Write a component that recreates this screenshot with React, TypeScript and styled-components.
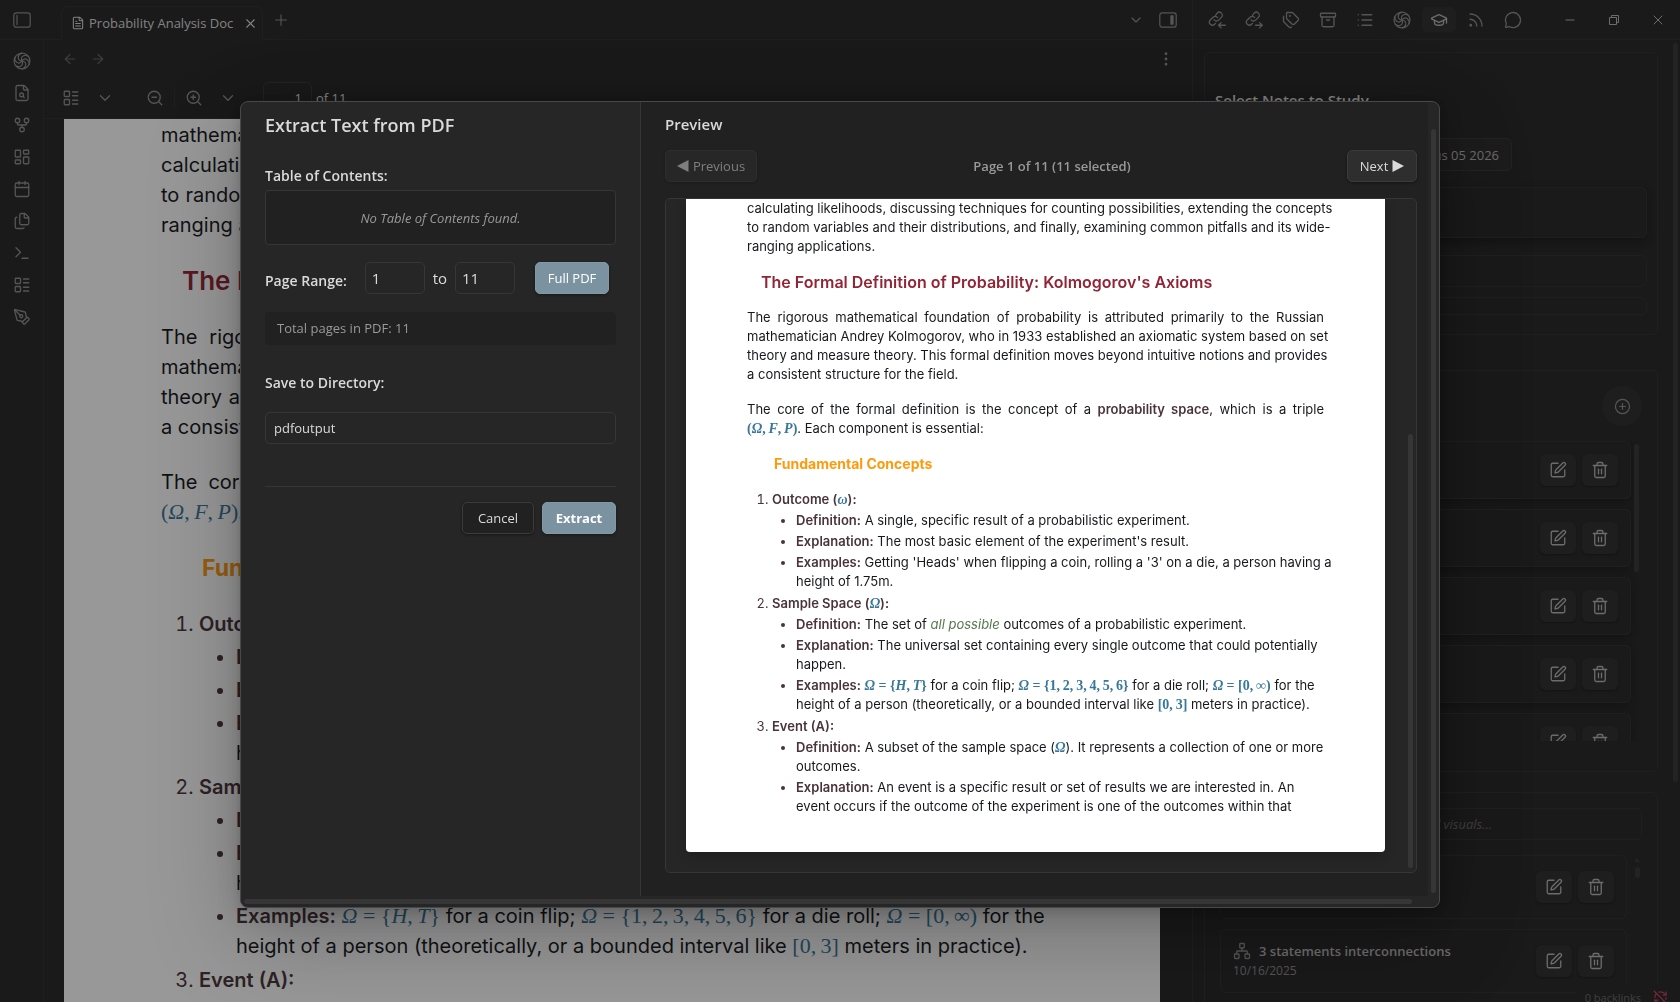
import React from "react";
import styled, { createGlobalStyle, css } from "styled-components";
import {
  Archive,
  ArrowLeft,
  ArrowRight,
  Calendar,
  ChevronDown,
  CirclePlus,
  EllipsisVertical,
  FileSearch,
  FileText,
  Files,
  GitFork,
  GraduationCap,
  LayoutDashboard,
  LayoutList,
  List,
  MessageCircle,
  Minus,
  Network,
  PenTool,
  Plus,
  RefreshCwOff,
  Rss,
  SquarePen,
  Tags,
  Terminal,
  Trash2,
  X,
  ZoomIn,
  ZoomOut,
} from "lucide-react";

const ui = `"Segoe UI", "Open Sans", "Noto Sans", sans-serif`;
const docFont = `Inter, "Liberation Sans", sans-serif`;
const mathFont = `"Liberation Serif", "Times New Roman", serif`;

const c = {
  bg: "#262626",
  side: "#212121",
  raised: "#2e2e2e",
  line: "#363636",
  faintLine: "#303030",
  text: "#dadada",
  muted: "#b3b3b3",
  icon: "#8c8c8c",
  faint: "#666666",
  accent: "#7b93a0",
};

const Global = createGlobalStyle`
  *, *::before, *::after { box-sizing: border-box; }
  body { margin: 0; background: ${c.bg}; }
  h1, h2, h3, p, ol, ul { margin: 0; padding: 0; }
  button, input { font: inherit; color: inherit; }
  svg { flex: none; }
`;

/* ---------- shell ---------- */

const Shell = styled.div`
  display: flex;
  flex-direction: column;
  height: 100vh;
  overflow: hidden;
  background: ${c.bg};
  color: ${c.text};
  font: 13px/20px ${ui};
`;

const TitleBar = styled.header`
  display: flex;
  flex: none;
  height: 40px;
  border-bottom: 1px solid ${c.faintLine};
`;

const IconButton = styled.button<{ $w?: number; $h?: number; $tone?: string; $active?: boolean }>`
  display: flex;
  flex: none;
  align-items: center;
  justify-content: center;
  width: ${(p) => p.$w ?? 32}px;
  height: ${(p) => p.$h ?? 32}px;
  padding: 0;
  border: 0;
  border-radius: 5px;
  background: ${(p) => (p.$active ? c.raised : "transparent")};
  color: ${(p) => p.$tone ?? c.icon};
`;

const TabStrip = styled.div`
  display: flex;
  flex: 1;
  min-width: 0;
  align-items: center;
  padding-right: 8px;
`;

const Tab = styled.div`
  display: flex;
  align-items: center;
  align-self: flex-end;
  width: 202px;
  height: 34px;
  margin: 0 2px -1px 17px;
  padding-left: 9px;
  border: 1px solid ${c.faintLine};
  border-bottom-color: ${c.bg};
  border-radius: 7px 7px 0 0;
  gap: 4px;
  color: ${c.text};
`;

const TabLabel = styled.span`
  flex: 1;
  min-width: 0;
  white-space: nowrap;
`;

const Spacer = styled.div`
  flex: 1;
`;

const SideBarTools = styled.div`
  display: flex;
  flex: none;
  align-items: center;
  width: 488px;
  padding-left: 7px;
  border-left: 1px solid ${c.faintLine};
`;

const ToolGroup = styled.div`
  display: flex;
  gap: 3px;
`;

const WindowControls = styled.div`
  display: flex;
  flex: 1;
  justify-content: flex-end;
`;

const Body = styled.div`
  display: flex;
  flex: 1;
  min-height: 0;
`;

const Ribbon = styled.nav`
  display: flex;
  flex: none;
  flex-direction: column;
  align-items: center;
  width: 44px;
  padding-top: 5px;
  border-right: 1px solid ${c.faintLine};
`;

const Main = styled.main`
  display: flex;
  flex: 1;
  flex-direction: column;
  min-width: 0;
`;

const ViewHeader = styled.div`
  display: flex;
  flex: none;
  align-items: center;
  height: 38px;
  padding: 0 10px 0 12px;
`;

const PdfToolbar = styled.div`
  display: flex;
  flex: none;
  align-items: center;
  gap: 2px;
  height: 41px;
  padding-left: 11px;
  border-bottom: 1px solid ${c.faintLine};
`;

const ToolGap = styled.span<{ $w: number }>`
  width: ${(p) => p.$w}px;
`;

const ToolSeparator = styled.span`
  width: 1px;
  height: 18px;
  margin: 0 1px;
  background: ${c.faintLine};
`;

const PageInput = styled.input`
  width: 49px;
  height: 32px;
  margin-left: 17px;
  padding: 0 9px;
  border: 1px solid ${c.line};
  border-radius: 5px;
  background: transparent;
  text-align: right;
`;

const PageTotal = styled.span`
  margin-left: 2px;
`;

const Viewport = styled.div`
  flex: 1;
  min-height: 0;
  padding: 0 32px 0 20px;
  overflow: hidden;
`;

/* ---------- document ---------- */

type Size = "large" | "small";

const dims = {
  large: {
    font: 20, line: 30, pad: "1px 95px 60px 97px", h2: 26, h2Line: 34, h2Indent: 21, h3: 23, h3Line: 30, h3Indent: 41,
    h2Gap: 24, pGap: 25, h3Gap: 26, olIndent: 38, ulIndent: 37, gap: 3, top: 4, math: 22, mathWeight: 400,
  },
  small: {
    font: 13, line: 19, pad: "0 61px 36px", h2: 16, h2Line: 22, h2Indent: 14, h3: 14, h3Line: 20, h3Indent: 27,
    h2Gap: 15, pGap: 16, h3Gap: 16, olIndent: 25, ulIndent: 24, gap: 2, top: 3, math: 14, mathWeight: 700,
  },
};

const Line = styled.span`
  display: block;
  white-space: nowrap;
`;

const MathText = styled.span`
  font-family: ${mathFont};
  line-height: 1;
  color: #37779a;
`;

const Sheet = styled.article<{ $s: Size }>`
  background: #fff;
  color: #16181c;
  font: ${(p) => dims[p.$s].font}px/${(p) => dims[p.$s].line}px ${docFont};
  padding: ${(p) => dims[p.$s].pad};
  ${(p) => p.$s === "small" && css`border-radius: 0 0 4px 4px; box-shadow: 0 4px 12px rgba(0, 0, 0, 0.2);`}

  p ${Line}:not(:last-child) { text-align-last: justify; }
  p + p { margin-top: ${(p) => dims[p.$s].pGap}px; }
  h2 {
    margin: ${(p) => dims[p.$s].h2Gap}px 0 ${(p) => dims[p.$s].h2Gap}px ${(p) => dims[p.$s].h2Indent}px;
    font-size: ${(p) => dims[p.$s].h2}px;
    line-height: ${(p) => dims[p.$s].h2Line}px;
    font-weight: 600;
    color: #932436;
  }
  h3 {
    margin: ${(p) => dims[p.$s].h3Gap}px 0 ${(p) => dims[p.$s].h3Gap}px ${(p) => dims[p.$s].h3Indent}px;
    font-size: ${(p) => dims[p.$s].h3}px;
    line-height: ${(p) => dims[p.$s].h3Line}px;
    font-weight: 700;
    color: #ff9a0d;
  }
  strong { font-weight: 600; color: #49343a; }
  em { color: #56784f; }
  ol { padding-left: ${(p) => dims[p.$s].olIndent}px; }
  ul { padding-left: ${(p) => dims[p.$s].ulIndent}px; list-style: disc; }
  li > ul { margin-top: ${(p) => dims[p.$s].gap}px; }
  ol > li + li { margin-top: ${(p) => dims[p.$s].top}px; }
  ul > li + li { margin-top: ${(p) => dims[p.$s].gap}px; }
  li::marker { color: #49343a; }
  ${MathText} {
    font-size: ${(p) => dims[p.$s].math}px;
    font-weight: ${(p) => dims[p.$s].mathWeight};
  }
`;

const thin = "\u2009";
const Omega = () => <MathText><i>Ω</i></MathText>;

function Document({ size }: { size: Size }) {
  return (
    <Sheet $s={size}>
      <p>
        {size === "large" && (
          <Line>mathematical principles that govern uncertainty, covering its axioms, methods for</Line>
        )}
        <Line>calculating likelihoods, discussing techniques for counting possibilities, extending the concepts</Line>
        <Line>to random variables and their distributions, and finally, examining common pitfalls and its wide-</Line>
        <Line>ranging applications.</Line>
      </p>
      <h2>The Formal Definition of Probability: Kolmogorov's Axioms</h2>
      <p>
        <Line>The rigorous mathematical foundation of probability is attributed primarily to the Russian</Line>
        <Line>mathematician Andrey Kolmogorov, who in 1933 established an axiomatic system based on set</Line>
        <Line>theory and measure theory. This formal definition moves beyond intuitive notions and provides</Line>
        <Line>a consistent structure for the field.</Line>
      </p>
      <p>
        <Line>
          The core of the formal definition is the concept of a <strong>probability space</strong>, which is a triple
        </Line>
        <Line>
          <MathText>(<i>Ω</i>,{thin}<i>F</i>,{thin}<i>P</i>)</MathText>. Each component is essential:
        </Line>
      </p>
      <h3>Fundamental Concepts</h3>
      <ol>
        <li>
          <strong>Outcome (<MathText><i>ω</i></MathText>):</strong>
          <ul>
            <li><Line><strong>Definition:</strong> A single, specific result of a probabilistic experiment.</Line></li>
            <li><Line><strong>Explanation:</strong> The most basic element of the experiment's result.</Line></li>
            <li>
              <Line>
                <strong>Examples:</strong> Getting 'Heads' when flipping a coin, rolling a '3' on a die, a person having
                a
              </Line>
              <Line>height of 1.75m.</Line>
            </li>
          </ul>
        </li>
        <li>
          <strong>Sample Space (<Omega />):</strong>
          <ul>
            <li>
              <Line>
                <strong>Definition:</strong> The set of <em>all possible</em> outcomes of a probabilistic experiment.
              </Line>
            </li>
            <li>
              <Line>
                <strong>Explanation:</strong> The universal set containing every single outcome that could potentially
              </Line>
              <Line>happen.</Line>
            </li>
            <li>
              <Line>
                <strong>Examples:</strong>{" "}
                <MathText><i>Ω</i> = {"{"}<i>H</i>,{thin}<i>T</i>{"}"}</MathText> for a coin flip;{" "}
                <MathText><i>Ω</i> = {`{${[1, 2, 3, 4, 5, 6].join("," + thin)}}`}</MathText> for a die roll;{" "}
                <MathText><i>Ω</i> = [0,{thin}∞)</MathText> for the
              </Line>
              <Line>
                height of a person (theoretically, or a bounded interval like <MathText>[0,{thin}3]</MathText> meters in
                practice).
              </Line>
            </li>
          </ul>
        </li>
        <li>
          <strong>Event (A):</strong>
          <ul>
            <li>
              <Line>
                <strong>Definition:</strong> A subset of the sample space (<Omega />). It represents a collection of one
                or more
              </Line>
              <Line>outcomes.</Line>
            </li>
            <li>
              <Line>
                <strong>Explanation:</strong> An event is a specific result or set of results we are interested in. An
              </Line>
              <Line>event occurs if the outcome of the experiment is one of the outcomes within that</Line>
            </li>
          </ul>
        </li>
      </ol>
    </Sheet>
  );
}

/* ---------- study side bar ---------- */

const SideBar = styled.aside`
  display: flex;
  flex: none;
  width: 488px;
  padding: 0 2px 0 11px;
  border-left: 1px solid ${c.faintLine};
`;

const SideColumn = styled.div`
  display: flex;
  flex: 1;
  flex-direction: column;
  gap: 35px;
  min-width: 0;
  padding: 12px 15px 0 0;
`;

const Track = styled.div<{ $pad: string }>`
  display: flex;
  flex: none;
  padding: ${(p) => p.$pad};
`;

const StepTrack = styled(Track)`
  flex-direction: column;
  align-items: center;
  gap: 5px;
  color: ${c.line};
`;

const Thumb = styled.span<{ $h: string; $w?: string }>`
  width: ${(p) => p.$w ?? "5px"};
  height: ${(p) => p.$h};
  border-radius: 3px;
  background: ${c.line};
`;

const Card = styled.section<{ $pad: string }>`
  flex: none;
  padding: ${(p) => p.$pad};
  border: 1px solid ${c.faintLine};
  border-radius: 6px;
`;

const VisualsCard = styled(Card)`
  margin-top: -15px;
`;

const SideTitle = styled.h2`
  font: 600 15px/20px ${ui};
  color: ${c.text};
`;

const ChipRow = styled.div`
  display: flex;
  justify-content: flex-end;
  margin-top: 28px;
  padding-right: 135px;
`;

const Chip = styled.button`
  height: 33px;
  padding: 0 12px;
  border: 1px solid ${c.line};
  border-radius: 5px;
  background: #2a2a2a;
  color: ${c.muted};
`;

const Slot = styled.div<{ $h: number; $top: number; $shadow?: boolean }>`
  height: ${(p) => p.$h}px;
  margin-top: ${(p) => p.$top}px;
  border: 1px solid ${c.faintLine};
  border-radius: 6px;
  box-shadow: ${(p) => (p.$shadow ? "0 4px 10px rgba(0, 0, 0, 0.3)" : "none")};
`;

const AddRow = styled.div`
  display: flex;
  justify-content: flex-end;
`;

const AddButton = styled.button`
  display: flex;
  align-items: center;
  justify-content: center;
  width: 40px;
  height: 40px;
  padding: 0;
  border: 0;
  border-radius: 50%;
  background: ${c.raised};
  color: ${c.icon};
`;

const ListArea = styled.div<{ $h: number }>`
  display: flex;
  height: ${(p) => p.$h}px;
  margin-top: 15px;
  overflow: hidden;
`;

const Rows = styled.ul`
  display: flex;
  flex: 1;
  flex-direction: column;
  gap: 10px;
  list-style: none;
`;

const Row = styled.li<{ $h: number; $shadow?: boolean }>`
  display: flex;
  flex: none;
  align-items: center;
  gap: 6px;
  height: ${(p) => p.$h}px;
  padding: 0 12px;
  border: 1px solid ${c.faintLine};
  border-radius: 6px;
  box-shadow: ${(p) => (p.$shadow ? "0 3px 8px rgba(0, 0, 0, 0.3)" : "none")};
`;

const RowText = styled.div`
  flex: 1;
  color: ${c.faint};
`;

const RowTitle = styled.h3`
  display: flex;
  align-items: center;
  gap: 8px;
  font: 600 13px/20px ${ui};
  color: ${c.muted};
  svg { color: ${c.icon}; }
`;

const RowDate = styled.div`
  font-size: 12px;
  color: ${c.icon};
`;

const RowButton = styled.button`
  display: flex;
  align-items: center;
  justify-content: center;
  width: 36px;
  height: 32px;
  padding: 0;
  border: 0;
  border-radius: 6px;
  background: ${c.raised};
  box-shadow: 0 1px 2px rgba(0, 0, 0, 0.3);
  color: ${c.muted};
`;

const SearchInput = styled.input`
  display: block;
  width: 100%;
  height: 32px;
  padding: 0 12px;
  border: 1px solid ${c.faintLine};
  border-radius: 5px;
  background: transparent;
  &::placeholder { font-style: italic; color: ${c.faint}; opacity: 1; }
`;

const StatusBar = styled.footer`
  position: fixed;
  right: 0;
  bottom: 0;
  display: flex;
  align-items: center;
  gap: 12px;
  height: 17px;
  padding: 8px 12px 0 8px;
  overflow: hidden;
  background: ${c.bg};
  color: ${c.faint};
  font-size: 11px;
  svg { color: #c0405a; }
`;

/* ---------- modal ---------- */

const Cover = styled.div`
  position: fixed;
  inset: 0;
  display: flex;
  align-items: center;
  justify-content: center;
  padding-top: 7px;
  background: rgba(10, 10, 10, 0.42);
  font: 13px/20px ${ui};
  color: ${c.text};
`;

const Modal = styled.div`
  display: grid;
  grid-template: minmax(0, 1fr) 11px / minmax(0, 1fr) 11px;
  width: min(1200px, 94vw);
  height: calc(100vh - 195px);
  overflow: hidden;
  border: 1px solid #484848;
  border-radius: 8px;
  background: ${c.bg};
  box-shadow: 0 2px 8px rgba(0, 0, 0, 0.1), 0 6px 25px rgba(0, 0, 0, 0.15), 0 30px 90px rgba(0, 0, 0, 0.25);
`;

const Panes = styled.div`
  display: flex;
  min-height: 0;
`;

const FormPane = styled.form`
  flex: none;
  width: 400px;
  padding: 11px 24px 0;
  border-right: 1px solid ${c.line};
`;

const ModalTitle = styled.h1`
  font: 600 18px/24px ${ui};
`;

const FieldLabel = styled.label`
  font: 600 14px/20px ${ui};
`;

const BlockLabel = styled(FieldLabel)<{ $top: number; $bottom: number }>`
  display: block;
  margin: ${(p) => p.$top}px 0 ${(p) => p.$bottom}px;
`;

const TocBox = styled.output`
  display: flex;
  align-items: center;
  justify-content: center;
  height: 55px;
  border: 1px solid ${c.line};
  border-radius: 4px;
  background: ${c.side};
  font-style: italic;
  color: #999;
`;

const RangeRow = styled.div`
  display: flex;
  align-items: center;
  margin-top: 17px;
  font-size: 15px;
`;

const RangeLabel = styled(FieldLabel)`
  flex: 1;
  align-self: flex-end;
  line-height: 26px;
`;

const field = css`
  height: 32px;
  padding: 0 8px;
  border: 1px solid ${c.line};
  border-radius: 5px;
  background: ${c.bg};
`;

const RangeInput = styled.input`
  ${field}
  width: 60px;
  padding: 0 6px;
`;

const To = styled.span`
  margin: 0 8px;
`;

const Info = styled.div`
  height: 33px;
  margin-top: 18px;
  padding: 6px 12px;
  border-radius: 4px;
  background: ${c.side};
  color: #999;
`;

const DirectoryInput = styled.input`
  ${field}
  display: block;
  width: 100%;
`;

const Button = styled.button<{ $kind?: "accent" | "plain" | "dark"; $w: number; $bold?: boolean }>`
  display: flex;
  flex: none;
  align-items: center;
  justify-content: center;
  gap: 4px;
  width: ${(p) => p.$w}px;
  height: 32px;
  padding: 0;
  border: 1px solid ${(p) => (p.$kind === "accent" ? "#8299a5" : "#3b3b3b")};
  border-radius: 5px;
  background: ${(p) => (p.$kind === "accent" ? c.accent : p.$kind === "dark" ? c.side : c.raised)};
  box-shadow: 0 1px 3px rgba(0, 0, 0, 0.4);
  font: ${(p) => (p.$bold ? 700 : 400)} 13px/20px ${ui};
  color: ${(p) => (p.$kind === "accent" ? "#fff" : c.text)};
  &:disabled { opacity: 0.5; }
`;

const FullButton = styled(Button)`
  margin: 0 7px 0 20px;
`;

const Actions = styled.div`
  display: flex;
  justify-content: flex-end;
  gap: 8px;
  margin-top: 42px;
  padding-top: 15px;
  border-top: 1px solid ${c.line};
`;

const PreviewPane = styled.section`
  display: flex;
  flex: 1;
  flex-direction: column;
  min-width: 0;
  padding: 12px 11px 23px 24px;
  background: ${c.side};
`;

const PreviewTitle = styled.h2`
  font: 600 15px/20px ${ui};
`;

const Pager = styled.div`
  display: flex;
  align-items: center;
  justify-content: space-between;
  margin: 16px 0;
`;

const PagerStatus = styled.span`
  font-weight: 600;
  color: #999;
`;

const PreviewBox = styled.div`
  display: flex;
  flex: 1;
  min-height: 0;
  overflow: hidden;
  border: 1px solid ${c.line};
  border-radius: 5px;
  background: ${c.bg};
`;

const PreviewScroll = styled.div`
  flex: 1;
  min-width: 0;
  padding: 0 20px;
`;

/* ---------- drawings ---------- */

const svgProps = { fill: "none", stroke: "currentColor", strokeLinecap: "round", strokeLinejoin: "round" } as const;

const Swirl = ({ size = 18 }: { size?: number }) => (
  <svg width={size} height={size} viewBox="0 0 24 24" {...svgProps} strokeWidth="1.6">
    <circle cx="12" cy="12" r="10.6" />
    {[0, 60, 120, 180, 240, 300].map((a) => (
      <path key={a} d="M12 12c-1.600-3-.6-5.800 2-7 2.300-1 5.200-.4 7 1.500" transform={`rotate(${a} 12 12)`} />
    ))}
  </svg>
);

const LinkArrow = ({ out }: { out?: boolean }) => (
  <svg width="18" height="18" viewBox="0 0 24 24" {...svgProps} strokeWidth="1.75">
    <path d="M8.500 16.500 7.300 17.700a4 4 0 0 1-5.700-5.700l3.700-3.700a4 4 0 0 1 6 .4" transform="translate(1.500 0)" />
    <path d="M10.500 6 12.700 2.800a4 4 0 0 1 5.700 5.700l-3.700 3.700a4 4 0 0 1-6-.4" transform="translate(-.5 0)" />
    <path d={out ? "M14 19h9M19.500 15.500 23 19l-3.500 3.500" : "M23 19h-9M17.500 15.500 14 19l3.500 3.500"} />
  </svg>
);

const PanelLeftIcon = () => (
  <svg width="18" height="16" viewBox="0 0 18 16" {...svgProps} strokeWidth="1.2">
    <rect x=".8" y=".8" width="16.400" height="14.400" rx="2.500" />
    <path d="M4 3.500v9" />
  </svg>
);

const PanelRightIcon = () => (
  <svg width="18" height="16" viewBox="0 0 18 16" {...svgProps} strokeWidth="1.2">
    <rect x=".8" y=".8" width="16.400" height="14.400" rx="2.500" />
    <rect x="11.300" y="3.300" width="3.400" height="9.400" rx=".6" fill="currentColor" stroke="none" />
  </svg>
);

const RestoreIcon = () => (
  <svg width="12" height="12" viewBox="0 0 12 12" fill="none" stroke="currentColor">
    <path d="M1.500 3.500h7v7h-7zM3.500 3.500v-2h7v7h-2" />
  </svg>
);

const Triangle = ({ left }: { left?: boolean }) => (
  <svg width="12" height="12" viewBox="0 0 12 12" fill="currentColor">
    <path d={left ? "M11.500 0v12L0 6z" : "M.5 0v12L12 6z"} />
  </svg>
);

const StepUp = () => (
  <svg width="6" height="4" viewBox="0 0 6 4" fill="currentColor">
    <path d="M0 4 3 0l3 4z" />
  </svg>
);

const icon = { size: 18, strokeWidth: 1.75 };

const ribbon = [
  ["Assistant", <Swirl />],
  ["Search files", <FileSearch {...icon} />],
  ["Graph", <GitFork {...icon} />],
  ["Canvas", <LayoutDashboard {...icon} />],
  ["Daily note", <Calendar {...icon} />],
  ["Templates", <Files {...icon} />],
  ["Command palette", <Terminal {...icon} />],
  ["Outline", <LayoutList {...icon} />],
  ["Draw", <PenTool {...icon} />],
] as const;

const sideTools = [
  ["Backlinks", <LinkArrow />],
  ["Outgoing links", <LinkArrow out />],
  ["Tags", <Tags {...icon} />],
  ["Archive", <Archive {...icon} />],
  ["Outline", <List {...icon} />],
  ["Assistant", <Swirl />],
  ["Study", <GraduationCap {...icon} />],
  ["Feeds", <Rss {...icon} />],
  ["Chat", <MessageCircle {...icon} />],
] as const;

const RowActions = () => (
  <>
    <RowButton aria-label="Edit"><SquarePen {...icon} /></RowButton>
    <RowButton aria-label="Delete"><Trash2 {...icon} /></RowButton>
  </>
);

/* ---------- page ---------- */

export default function App() {
  return (
    <>
      <Global />
      <Shell>
        <TitleBar>
          <IconButton aria-label="Toggle left panel" $w={44} $h={39}><PanelLeftIcon /></IconButton>
          <TabStrip>
            <Tab>
              <FileText size={14} strokeWidth={1.75} />
              <TabLabel>Probability Analysis Doc</TabLabel>
              <IconButton aria-label="Close tab" $w={24} $h={28} $tone={c.text}><X size={15} strokeWidth={1.75} /></IconButton>
            </Tab>
            <IconButton aria-label="New tab"><Plus size={18} strokeWidth={1.5} /></IconButton>
            <Spacer />
            <IconButton aria-label="Tab list"><ChevronDown {...icon} size={16} /></IconButton>
            <IconButton aria-label="Toggle right panel"><PanelRightIcon /></IconButton>
          </TabStrip>
          <SideBarTools>
            <ToolGroup>
              {sideTools.map(([name, glyph]) => (
                <IconButton
                  key={name}
                  aria-label={name}
                  $w={34}
                  $h={25}
                  $active={name === "Study"}
                  $tone={name === "Study" ? c.muted : undefined}
                >
                  {glyph}
                </IconButton>
              ))}
            </ToolGroup>
            <WindowControls>
              <IconButton aria-label="Minimize" $w={44} $tone={c.muted}><Minus size={14} strokeWidth={1.75} /></IconButton>
              <IconButton aria-label="Restore" $w={44} $tone={c.muted}><RestoreIcon /></IconButton>
              <IconButton aria-label="Close" $w={44} $tone={c.muted}><X size={16} strokeWidth={1.5} /></IconButton>
            </WindowControls>
          </SideBarTools>
        </TitleBar>

        <Body>
          <Ribbon>
            {ribbon.map(([name, glyph]) => (
              <IconButton key={name} aria-label={name}>{glyph}</IconButton>
            ))}
          </Ribbon>

          <Main>
            <ViewHeader>
              <IconButton aria-label="Back" $w={28} $tone={c.faint}><ArrowLeft size={16} strokeWidth={1.75} /></IconButton>
              <IconButton aria-label="Forward" $w={28} $tone={c.faint}><ArrowRight size={16} strokeWidth={1.75} /></IconButton>
              <Spacer />
              <IconButton aria-label="More options"><EllipsisVertical {...icon} /></IconButton>
            </ViewHeader>
            <PdfToolbar>
              <IconButton aria-label="Thumbnails"><LayoutList {...icon} /></IconButton>
              <IconButton aria-label="View options"><ChevronDown {...icon} /></IconButton>
              <ToolGap $w={14} />
              <IconButton aria-label="Zoom out"><ZoomOut {...icon} /></IconButton>
              <ToolSeparator />
              <IconButton aria-label="Zoom in"><ZoomIn {...icon} /></IconButton>
              <IconButton aria-label="Zoom options"><ChevronDown {...icon} /></IconButton>
              <PageInput aria-label="Page" defaultValue="1" />
              <PageTotal>of 11</PageTotal>
            </PdfToolbar>
            <Viewport>
              <Document size="large" />
            </Viewport>
          </Main>

          <SideBar>
            <SideColumn>
              <Card $pad="37px 10px 19px">
                <SideTitle>Select Notes to Study</SideTitle>
                <ChipRow><Chip>Calculus 05 2026</Chip></ChipRow>
                <Slot $h={51} $top={16} $shadow />
                <Slot $h={32} $top={17} />
                <Slot $h={18} $top={10} />
              </Card>
              <Card $pad="15px 15px 30px">
                <AddRow><AddButton aria-label="Add note"><CirclePlus size={17} strokeWidth={1.75} /></AddButton></AddRow>
                <ListArea $h={300}>
                  <Rows>
                    {[1, 2, 3, 4, 5].map((n) => (
                      <Row key={n} $h={58} $shadow><RowText /><RowActions /></Row>
                    ))}
                  </Rows>
                  <Track $pad="3px 3px 0"><Thumb $h="128px" /></Track>
                </ListArea>
              </Card>
              <VisualsCard $pad="15px 15px 0">
                <SearchInput aria-label="Search visuals" placeholder="Search your saved notes, charts and visuals..." />
                <ListArea $h={300}>
                  <Rows>
                    <Row $h={64}><RowText /><RowActions /></Row>
                    <Row $h={64}>
                      <RowText>
                        <RowTitle><Network size={18} strokeWidth={1.75} />3 statements interconnections</RowTitle>
                        <RowDate>10/16/2025</RowDate>
                      </RowText>
                      <RowActions />
                    </Row>
                  </Rows>
                  <StepTrack $pad="3px 2px 0 7px"><StepUp /><Thumb $h="11px" /></StepTrack>
                </ListArea>
              </VisualsCard>
            </SideColumn>
            <Track $pad="3px 0 0"><Thumb $h="739px" /></Track>
          </SideBar>
        </Body>
        <StatusBar>
          <span>0 backlinks</span>
          <RefreshCwOff size={15} />
        </StatusBar>
      </Shell>

      <Cover>
        <Modal role="dialog" aria-labelledby="modal-title">
          <Panes>
            <FormPane onSubmit={(e) => e.preventDefault()}>
              <ModalTitle id="modal-title">Extract Text from PDF</ModalTitle>
              <BlockLabel $top={29} $bottom={4} htmlFor="toc">Table of Contents:</BlockLabel>
              <TocBox id="toc">No Table of Contents found.</TocBox>
              <RangeRow>
                <RangeLabel htmlFor="from">Page Range:</RangeLabel>
                <RangeInput id="from" defaultValue="1" />
                <To>to</To>
                <RangeInput aria-label="Last page" defaultValue="11" />
                <FullButton type="button" $kind="accent" $w={74}>Full PDF</FullButton>
              </RangeRow>
              <Info>Total pages in PDF: 11</Info>
              <BlockLabel $top={28} $bottom={19} htmlFor="dir">Save to Directory:</BlockLabel>
              <DirectoryInput id="dir" defaultValue="pdfoutput" />
              <Actions>
                <Button type="button" $kind="dark" $w={72}>Cancel</Button>
                <Button type="submit" $kind="accent" $w={74} $bold>Extract</Button>
              </Actions>
            </FormPane>
            <PreviewPane>
              <PreviewTitle>Preview</PreviewTitle>
              <Pager>
                <Button $w={92} disabled><Triangle left />Previous</Button>
                <PagerStatus>Page 1 of 11 (11 selected)</PagerStatus>
                <Button $w={70}>Next<Triangle /></Button>
              </Pager>
              <PreviewBox>
                <PreviewScroll><Document size="small" /></PreviewScroll>
                <Track $pad="235px 3px 4px"><Thumb $h="100%" /></Track>
              </PreviewBox>
            </PreviewPane>
          </Panes>
          <Track $pad="27px 3px 3px"><Thumb $h="100%" /></Track>
          <Track $pad="3px 16px 3px 3px"><Thumb $w="100%" $h="5px" /></Track>
        </Modal>
      </Cover>
    </>
  );
}
